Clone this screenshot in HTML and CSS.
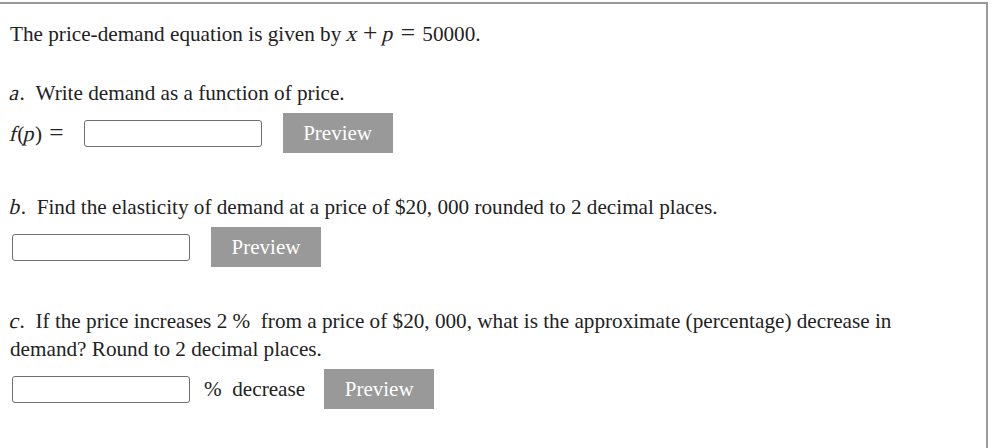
FILE: index.html
```html
<!DOCTYPE html>
<html>
<head>
<meta charset="utf-8">
<link rel="stylesheet" href="styles.css">
</head>
<body>
<div class="question">
  <p class="line first">The price-demand equation is given by <span class="math"><i>x</i><span class="bin">+</span><i>p</i><span class="rel">=</span>50000</span>.</p>

  <p class="line part"><i class="lbl">a</i>. &nbsp;Write demand as a function of price.</p>
  <div class="row">
    <span class="math fp"><i>f</i>(<i>p</i>)<span class="rel">=</span></span>
    <input class="answer" type="text">
    <button class="preview">Preview</button>
  </div>

  <p class="line part gap"><i class="lbl">b</i>. &nbsp;Find the elasticity of demand at a price of $20, 000 rounded to 2 decimal places.</p>
  <div class="row">
    <input class="answer" type="text">
    <button class="preview">Preview</button>
  </div>

  <p class="line part gap"><i class="lbl">c</i>. &nbsp;If the price increases 2 % &nbsp;from a price of $20, 000, what is the approximate (percentage) decrease in demand? Round to 2 decimal places.</p>
  <div class="row">
    <input class="answer" type="text">
    <span class="unit">% &nbsp;decrease</span>
    <button class="preview">Preview</button>
  </div>

  <p class="line hint">See Hint</p>
</div>
</body>
</html>
```

FILE: styles.css
```css
html, body {
  margin: 0;
  padding: 0;
  background: #fff;
}
body {
  font-family: "Liberation Serif", "Times New Roman", serif;
  font-size: 21.2px;
  color: #222;
  overflow: hidden;
  height: 448px;
}
.question {
  margin-top: 2px;
  margin-right: 6px;
  border-top: 2px solid #999;
  border-right: 2px solid #999;
  padding: 16px 20px 0 10px;
  height: 430px;
  overflow: hidden;
}
.line {
  margin: 0;
  line-height: 28px;
  max-width: 900px;
}
.part {
  margin-top: 31px;
}
.part.gap {
  margin-top: 40px;
}
.math i, .lbl {
  display: inline-block;
  font-style: normal;
  transform: skewX(-14deg);
  font-size: 1.02em;
}
.bin {
  display: inline-block;
  font-size: 1.2em;
  line-height: 1;
  margin: 0 0.22em;
}
.rel {
  display: inline-block;
  font-size: 1.2em;
  line-height: 1;
  margin: 0 0.28em;
}
.row {
  display: flex;
  align-items: center;
  margin-top: 6px;
  height: 40px;
}
.fp {
  margin-right: 18px;
}
.fp .rel {
  margin-right: 0;
}
.answer {
  box-sizing: border-box;
  width: 178px;
  height: 27px;
  margin: 0 0 0 2px;
  border: 1px solid #6e6e6e;
  border-radius: 3px;
  padding: 0 4px;
  font: inherit;
  background: #fff;
}
.unit {
  margin-left: 14px;
  margin-right: 19px;
}
.preview {
  box-sizing: border-box;
  width: 110px;
  height: 40px;
  margin-left: 21px;
  border: none;
  background: #999;
  color: #fff;
  font-family: "Liberation Serif", "Times New Roman", serif;
  font-size: 21px;
  padding: 0;
}
.unit + .preview {
  margin-left: 0;
}
.hint {
  margin-top: 37px;
}
```
